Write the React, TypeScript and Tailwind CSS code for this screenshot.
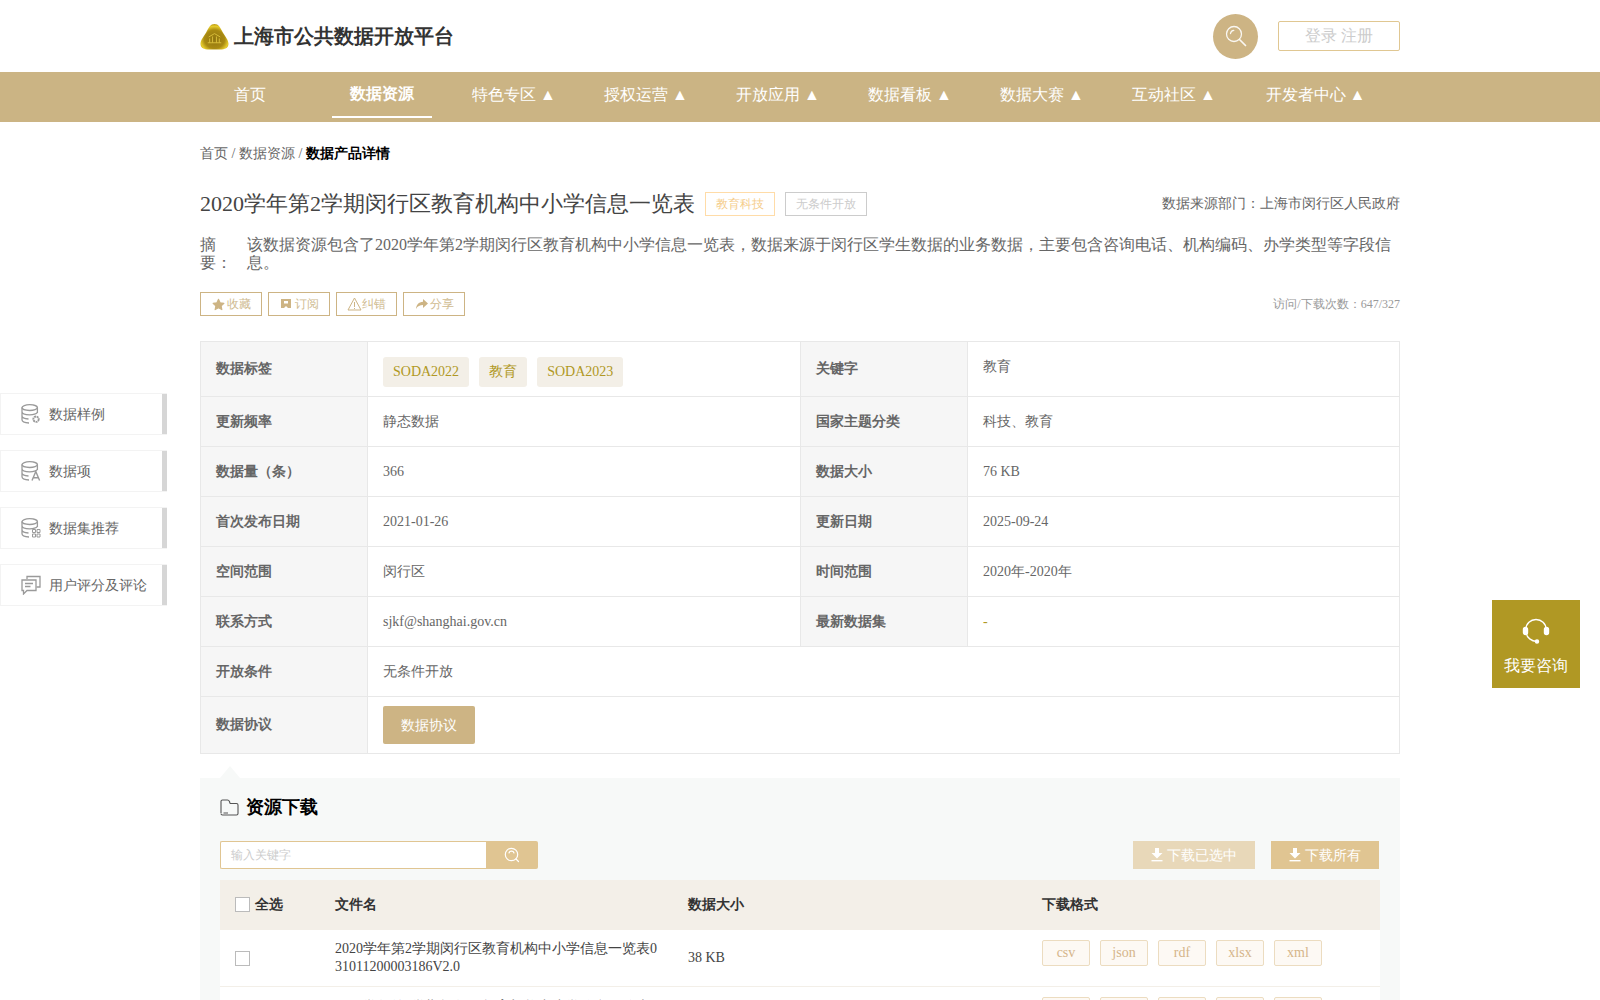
import React from "react";

const navItems = ["特色专区 ▲", "授权运营 ▲", "开放应用 ▲", "数据看板 ▲", "数据大赛 ▲", "互动社区 ▲"];

function Logo() {
  return (
    <svg width="29" height="27" viewBox="0 0 30 28" className="mr-[1px] shrink-0">
      <defs>
        <radialGradient id="lg" cx="0.5" cy="0.6" r="0.6">
          <stop offset="0" stopColor="#8f7410" />
          <stop offset="0.6" stopColor="#a98a12" />
          <stop offset="0.85" stopColor="#e6cc2c" />
          <stop offset="1" stopColor="#b8960f" />
        </radialGradient>
      </defs>
      <path d="M15 1C19 1 21 4.5 23.5 9.5C26 14 29.5 17.5 29.5 21.5C29.5 26 25.5 27.5 21 27.5H9C4.5 27.5 0.5 26 0.5 21.5C0.5 17.5 4 14 6.5 9.5C9 4.5 11 1 15 1Z" fill="url(#lg)" />
      <path d="M8 20.5H22M10 20.5V16M13 20.5V14M17 20.5V14M20 20.5V16M9 14.5L15 11L21 14.5" stroke="#d9bd3a" strokeWidth="1" fill="none" />
    </svg>
  );
}

function Magnifier() {
  return (
    <svg width="24" height="24" viewBox="0 0 24 24" fill="none" stroke="#fff" strokeWidth="1.3" opacity="0.9">
      <circle cx="10" cy="10" r="7.5" />
      <path d="M15.5 15.5L21.5 21.5" strokeLinecap="round" strokeWidth="1.7" />
      <path d="M6.5 9.5C6.8 7.8 8 6.6 9.8 6.4" strokeLinecap="round" />
    </svg>
  );
}

function SmallSearch() {
  return (
    <svg width="16" height="16" viewBox="0 0 16 16" fill="none" stroke="#fff" strokeWidth="1.2">
      <circle cx="7.5" cy="7.5" r="6.2" />
      <path d="M12 12L14.5 14.5" strokeLinecap="round" />
      <path d="M5 6C5.3 4.8 6.2 4.2 7.5 4.2M10 6C9.7 4.8 8.8 4.2 7.5 4.2" strokeLinecap="round" />
    </svg>
  );
}

function DbBase({ children }: { children?: React.ReactNode }) {
  return (
    <svg width="20" height="20" viewBox="0 0 20 20" fill="none" stroke="#9a9a9a" strokeWidth="1.3" className="shrink-0">
      <ellipse cx="8.7" cy="3.6" rx="7.7" ry="2.9" />
      <path d="M1 3.6V15.8C1 17.5 3.8 18.8 8 19M16.4 3.6V9M1 7.8C1 9.5 4.4 10.8 8.7 10.8C12 10.8 15.2 10 16.4 8.4M1 12C1 13.5 3.5 14.7 7.5 15" />
      {children}
    </svg>
  );
}

const SideIcons = [
  <DbBase key="a">
    <circle cx="15" cy="15.2" r="2.7" strokeWidth="1.9" strokeDasharray="2 0.6" />
  </DbBase>,
  <DbBase key="b">
    <path d="M11 19.5L14.8 10.5L18.6 19.5M12.2 16.8H17.4" strokeWidth="1.4" />
  </DbBase>,
  <DbBase key="c">
    <path d="M11.5 11.5H14.5V14.5H11.5ZM16 11.5H19V14.5H16ZM11.5 16H14.5V19H11.5ZM16 16H19V19H16Z" strokeWidth="1" />
  </DbBase>,
  <svg key="d" width="20" height="20" viewBox="0 0 20 20" fill="none" stroke="#9a9a9a" strokeWidth="1.3" className="shrink-0">
    <path d="M6 4V1.5H19V12H15.5" />
    <path d="M1 5H15V15.5H6L2.5 19V15.5H1Z" />
    <path d="M4 8.5H12M4 11.5H9.5" />
  </svg>,
];

function SideItem({ label, icon }: { label: string; icon: React.ReactNode }) {
  return (
    <div className="flex h-[42px] w-[167px] items-center border border-[#f3f3f3] border-r-0 bg-white">
      <div className="flex h-full flex-1 items-center gap-[8px] pl-[20px] text-[14px] text-[#666]">
        {icon}
        <span>{label}</span>
      </div>
      <div className="h-full w-[5px] bg-[#d6d6d6]" />
    </div>
  );
}

function ActionBtn({ icon, label, w }: { icon: React.ReactNode; label: string; w: string }) {
  return (
    <div className={`flex h-[24px] items-center justify-center border border-[#cdb484] text-[12px] text-[#cfbb90] ${w}`}>
      {icon}
      <span>{label}</span>
    </div>
  );
}

function Label({ children, extra }: { children: React.ReactNode; extra?: string }) {
  return (
    <div className={`flex w-[167px] shrink-0 items-center border-r border-[#e8e8e8] bg-[#f6f6f6] pl-[15px] text-[14px] font-bold text-[#666] ${extra ?? ""}`}>
      {children}
    </div>
  );
}

function Value({ children, w }: { children: React.ReactNode; w?: string }) {
  return <div className={`flex items-center pl-[15px] text-[14px] text-[#666] ${w ?? "flex-1"}`}>{children}</div>;
}

function Row({ left, leftV, right, rightV }: { left: string; leftV: React.ReactNode; right?: string; rightV?: React.ReactNode }) {
  return (
    <div className="flex h-[50px] border-b border-[#e8e8e8]">
      <Label>{left}</Label>
      {right ? (
        <>
          <div className="flex w-[433px] shrink-0 items-center border-r border-[#e8e8e8] pl-[15px] text-[14px] text-[#666]">{leftV}</div>
          <Label>{right}</Label>
          <Value>{rightV}</Value>
        </>
      ) : (
        <Value>{leftV}</Value>
      )}
    </div>
  );
}

function Tag({ children }: { children: React.ReactNode }) {
  return <span className="flex h-[30px] items-center rounded-[3px] bg-[#f3efe7] px-[10px] pb-[1px] text-[14px] text-[#b09824]">{children}</span>;
}

function DownloadIcon() {
  return (
    <svg width="12" height="14" viewBox="0 0 12 14" fill="#fff" className="mr-[4px] shrink-0">
      <path d="M4 0H8V5H11.5L6 10.5L0.5 5H4Z" />
      <rect x="0.5" y="12" width="11" height="1.4" />
    </svg>
  );
}

function Formats() {
  return (
    <div className="flex w-[338px] gap-[10px] pt-[10px]">
      {["csv", "json", "rdf", "xlsx", "xml"].map((f) => (
        <span key={f} className="flex h-[26px] w-[48px] items-center justify-center rounded-[2px] border border-[#ecdcc0] bg-[#fdf9f4] text-[14px] text-[#d5b58a]">
          {f}
        </span>
      ))}
    </div>
  );
}

export default function App() {
  return (
    <div className="relative h-[1000px] w-full overflow-hidden bg-white font-['Liberation_Serif',serif]">
      {/* Top bar */}
      <header className="mx-auto flex h-[72px] w-[1200px] items-center">
        <Logo />
        <span className="ml-[4px] font-['Liberation_Sans',sans-serif] text-[20px] font-bold text-[#333]">上海市公共数据开放平台</span>
        <div className="ml-auto flex h-[45px] w-[45px] items-center justify-center rounded-full bg-[#cdb484]">
          <Magnifier />
        </div>
        <div className="ml-[20px] flex h-[30px] w-[122px] items-center justify-center rounded-[2px] border border-[#e0c792] text-[16px] text-[#ccc]">登录 注册</div>
      </header>

      {/* Nav */}
      <nav className="h-[50px] bg-[#cbb484]">
        <div className="mx-auto flex h-full w-[1200px] gap-[32px] text-[16px] text-white">
          <div className="flex w-[100px] items-center justify-center pb-[4px]">首页</div>
          <div className="flex h-[46px] w-[100px] items-center justify-center border-b-2 border-white font-bold">数据资源</div>
          {navItems.map((n) => (
            <div key={n} className="flex w-[100px] items-center justify-center pb-[4px]">
              {n}
            </div>
          ))}
          <div className="flex w-[119px] items-center justify-center pb-[4px]">开发者中心 ▲</div>
        </div>
      </nav>

      <main className="mx-auto w-[1200px]">
        {/* Breadcrumb */}
        <div className="mt-[21px] flex h-[20px] items-center text-[14px] text-[#666]">
          <span>首页 / 数据资源 /&nbsp;</span>
          <span className="font-bold text-black">数据产品详情</span>
        </div>

        {/* Title */}
        <div className="mt-[29px] flex h-[24px] items-center">
          <h1 className="text-[22px] font-normal leading-[24px] text-[#444]">2020学年第2学期闵行区教育机构中小学信息一览表</h1>
          <span className="ml-[10px] flex h-[24px] w-[70px] items-center justify-center border border-[#ffdca8] text-[12px] text-[#f5cd8b]">教育科技</span>
          <span className="ml-[10px] flex h-[24px] w-[82px] items-center justify-center border border-[#ccc] text-[12px] text-[#ccc]">无条件开放</span>
          <span className="ml-auto pb-[2px] text-[14px] text-[#666]">数据来源部门：上海市闵行区人民政府</span>
        </div>

        {/* Summary */}
        <div className="mt-[20px] flex text-[16px] leading-[18px] text-[#666]">
          <div className="w-[47px] shrink-0">摘要：</div>
          <p className="flex-1 pr-[8px]">该数据资源包含了2020学年第2学期闵行区教育机构中小学信息一览表，数据来源于闵行区学生数据的业务数据，主要包含咨询电话、机构编码、办学类型等字段信息。</p>
        </div>

        {/* Actions */}
        <div className="mt-[20px] flex h-[24px] items-center gap-[6px]">
          <ActionBtn
            w="w-[62px]"
            label="收藏"
            icon={
              <svg width="13" height="13" viewBox="0 0 24 24" fill="#cdb484" stroke="#cdb484" strokeWidth="2" strokeLinejoin="round" className="mr-[2px]">
                <path d="M12 2.5L15 8.8L22 9.8L17 14.7L18.2 21.5L12 18.2L5.8 21.5L7 14.7L2 9.8L9 8.8Z" />
              </svg>
            }
          />
          <ActionBtn
            w="w-[62px]"
            label="订阅"
            icon={
              <svg width="12" height="12" viewBox="0 0 12 12" fill="#cdb484" className="mr-[3px]">
                <path d="M1 1H11V10H8L6 8L4 10H1ZM4 3V5.5H8V3Z" fillRule="evenodd" />
              </svg>
            }
          />
          <ActionBtn
            w="w-[61px]"
            label="纠错"
            icon={
              <svg width="15" height="14" viewBox="0 0 15 14" fill="none" stroke="#cdb484" strokeWidth="1">
                <path d="M7.5 1L14 13H1Z" />
                <path d="M7.5 5V10M7.5 11V12" />
              </svg>
            }
          />
          <ActionBtn
            w="w-[62px]"
            label="分享"
            icon={
              <svg width="13" height="12" viewBox="0 0 13 12" fill="#cdb484" className="mr-[2px]">
                <path d="M8 1L13 5.5L8 10V7C5 7 2.5 8 1 11C1.3 7 3.5 4 8 3.8Z" />
              </svg>
            }
          />
          <span className="ml-auto text-[12px] text-[#999]">访问/下载次数：647/327</span>
        </div>

        {/* Info table */}
        <div className="mt-[25px] border border-[#e8e8e8]">
          <div className="flex h-[55px] border-b border-[#e8e8e8]">
            <Label extra="pb-[1px]">数据标签</Label>
            <div className="flex w-[433px] shrink-0 items-start gap-[10px] border-r border-[#e8e8e8] pl-[15px] pt-[15px]">
              <Tag>SODA2022</Tag>
              <Tag>教育</Tag>
              <Tag>SODA2023</Tag>
            </div>
            <Label extra="pb-[1px]">关键字</Label>
            <div className="flex flex-1 items-center pb-[5px] pl-[15px] text-[14px] text-[#666]">教育</div>
          </div>
          <Row left="更新频率" leftV="静态数据" right="国家主题分类" rightV="科技、教育" />
          <Row left="数据量（条）" leftV="366" right="数据大小" rightV="76 KB" />
          <Row left="首次发布日期" leftV="2021-01-26" right="更新日期" rightV="2025-09-24" />
          <Row left="空间范围" leftV="闵行区" right="时间范围" rightV="2020年-2020年" />
          <Row left="联系方式" leftV="sjkf@shanghai.gov.cn" right="最新数据集" rightV={<span className="text-[#b09824]">-</span>} />
          <Row left="开放条件" leftV="无条件开放" />
          <div className="flex h-[56px]">
            <Label extra="pb-[2px]">数据协议</Label>
            <Value>
              <span className="flex h-[38px] w-[92px] items-center justify-center rounded-[2px] bg-[#cdb484] text-white">数据协议</span>
            </Value>
          </div>
        </div>

        {/* Download section */}
        <section className="relative mt-[24px] bg-[#f7f9f8] px-[20px]">
          <div className="absolute left-[20px] top-[-12px] h-0 w-0 border-x-[10px] border-b-[12px] border-x-transparent border-b-[#f7f9f8]" />
          <div className="flex h-[59px] items-center">
            <svg width="19" height="17" viewBox="0 0 19 17" fill="none" stroke="#555" strokeWidth="1.1" className="shrink-0">
              <path d="M1 14V2.5C1 1.6 1.6 1 2.5 1H7.5C8.5 1 9 1.5 9.5 2.5L10 4.5M1 14.5C1 15.5 1.6 16 2.5 16H16.5C17.5 16 18 15.5 18 14.5V6C18 5 17.5 4.5 16.5 4.5H10M3.5 14H8" />
            </svg>
            <h2 className="ml-[7px] text-[18px] font-bold text-black">资源下载</h2>
          </div>

          <div className="mt-[4px] flex h-[28px] items-stretch pr-[1px]">
            <div className="flex w-[266px] items-center rounded-l-[2px] border border-r-0 border-[#e0c592] bg-white pl-[10px] text-[12px] text-[#ccc]">输入关键字</div>
            <div className="flex w-[52px] items-center justify-center rounded-r-[2px] bg-[#e0c592]">
              <SmallSearch />
            </div>
            <div className="ml-auto flex w-[122px] items-center justify-center bg-[#e8d8b9] text-[14px] text-white">
              <DownloadIcon />
              下载已选中
            </div>
            <div className="ml-[16px] flex w-[108px] items-center justify-center bg-[#e0c592] text-[14px] text-white">
              <DownloadIcon />
              下载所有
            </div>
          </div>

          <div className="mt-[11px] bg-white">
            <div className="flex h-[50px] items-center bg-[#f3efe8] pb-[1px] text-[14px] font-bold text-[#333]">
              <div className="flex w-[115px] items-center pl-[15px]">
                <span className="mr-[5px] h-[15px] w-[15px] border border-[#bbb] bg-white" />
                全选
              </div>
              <div className="w-[353px]">文件名</div>
              <div className="w-[354px]">数据大小</div>
              <div>下载格式</div>
            </div>
            <div className="flex h-[57px] items-start border-b border-[#f3efe8] text-[14px] leading-[18px] text-[#444]">
              <div className="w-[115px] pl-[15px] pt-[21px]">
                <span className="block h-[15px] w-[15px] border border-[#bbb] bg-white" />
              </div>
              <div className="w-[353px] break-all pr-[26px] pt-[10px]">2020学年第2学期闵行区教育机构中小学信息一览表031011200003186V2.0</div>
              <div className="w-[354px] pt-[19px]">38 KB</div>
              <Formats />
            </div>
            <div className="flex h-[57px] items-start text-[14px] leading-[18px] text-[#444]">
              <div className="w-[115px] pl-[15px] pt-[21px]">
                <span className="block h-[15px] w-[15px] border border-[#bbb] bg-white" />
              </div>
              <div className="w-[353px] break-all pr-[26px] pt-[11px]">2020学年第2学期闵行区教育机构中小学信息一览表031011200003186V1.0</div>
              <div className="w-[354px] pt-[19px]">38 KB</div>
              <Formats />
            </div>
          </div>
        </section>
      </main>

      {/* Floating side nav */}
      <aside className="absolute left-0 top-[393px] flex flex-col gap-[15px]">
        {["数据样例", "数据项", "数据集推荐", "用户评分及评论"].map((l, i) => (
          <SideItem key={l} label={l} icon={SideIcons[i]} />
        ))}
      </aside>

      {/* Consult */}
      <div className="absolute left-[1492px] top-[600px] flex h-[88px] w-[88px] flex-col items-center bg-[#b09824] pt-[18px] text-[16px] text-white">
        <svg width="28" height="26" viewBox="0 0 28 26" fill="none" stroke="#fff" strokeWidth="1.4">
          <path d="M4 11C4 5.5 8.5 1.5 14 1.5C19.5 1.5 24 5.5 24 11" />
          <path d="M4.5 16C5 19.5 9 23 15 23.5" />
          <rect x="1.5" y="9.5" width="4" height="7" rx="2" fill="#fff" />
          <rect x="22.5" y="9.5" width="4" height="7" rx="2" fill="#fff" />
          <circle cx="15" cy="23.5" r="1.5" fill="#fff" />
        </svg>
        <span className="mt-[10px]">我要咨询</span>
      </div>
    </div>
  );
}
